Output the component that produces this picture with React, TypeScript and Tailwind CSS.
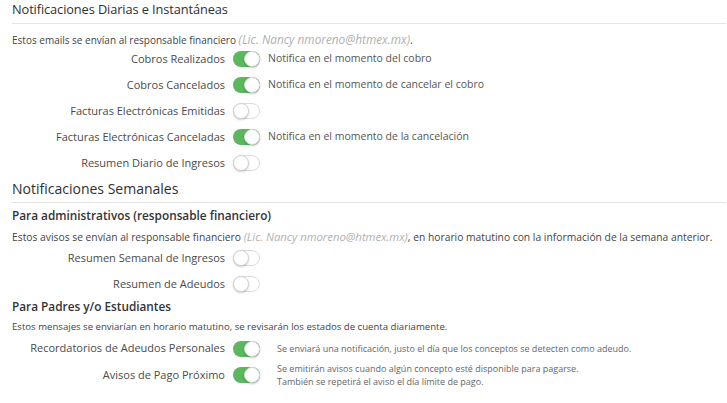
import React from "react";

function Toggle({ on }: { on: boolean }) {
  return on ? (
    <div className="relative w-[27px] h-[16px] rounded-full bg-[#5cb85c] shrink-0">
      <div className="absolute right-0 top-0 w-[16px] h-[16px] rounded-full bg-white border border-[#d9d9d9] shadow-[0_1px_2px_rgba(0,0,0,0.25)]" />
    </div>
  ) : (
    <div className="relative w-[27px] h-[16px] rounded-full bg-white border border-[#dcdcdc] shrink-0">
      <div className="absolute left-[-1px] top-[-1px] w-[16px] h-[16px] rounded-full bg-white border border-[#d4d4d4] shadow-[0_1px_2px_rgba(0,0,0,0.2)]" />
    </div>
  );
}

function Row({
  label,
  on,
  desc,
  small,
  h = "h-[26px]",
}: {
  label: string;
  on: boolean;
  desc?: React.ReactNode;
  small?: boolean;
  h?: string;
}) {
  return (
    <div className={`flex items-center ${h}`}>
      <div className="w-[221px] text-right pr-[8px] text-[11px] text-[#4a4a4a] whitespace-nowrap">{label}</div>
      <Toggle on={on} />
      {desc && (
        <div
          className={
            small
              ? "ml-[17px] text-[9px] leading-[13px] text-[#666]"
              : "ml-[8px] text-[10.5px] text-[#555]"
          }
        >
          {desc}
        </div>
      )}
    </div>
  );
}

export default function App() {
  return (
    <div className="w-[727px] h-[403px] bg-white pl-[12px] pr-[1px] font-['Open_Sans',sans-serif] text-[#444] overflow-hidden">
      <div className="h-[24px] border-b border-[#e5e5e5] flex items-center pb-[3px] text-[12.8px] tracking-[-0.1px] text-[#2f2f2f]">
        Notificaciones Diarias e Instantáneas
      </div>
      <div className="h-[22px] flex items-center pt-[10px] text-[10px] text-[#444]">
        <span>
          Estos emails se envían al responsable financiero{" "}
          <span className="italic text-[11.8px] text-[#b0b0b0]">(Lic. Nancy nmoreno@htmex.mx)</span>.
        </span>
      </div>
      <Row label="Cobros Realizados" on desc="Notifica en el momento del cobro" />
      <Row label="Cobros Cancelados" on desc="Notifica en el momento de cancelar el cobro" />
      <Row label="Facturas Electrónicas Emitidas" on={false} />
      <Row label="Facturas Electrónicas Canceladas" on desc="Notifica en el momento de la cancelación" />
      <Row label="Resumen Diario de Ingresos" on={false} />
      <div className="h-[27px] border-b border-[#e5e5e5] flex items-center pb-[1px] text-[14px] text-[#2f2f2f]">
        Notificaciones Semanales
      </div>
      <div className="h-[22px] flex items-center pt-[3px] text-[11.8px] font-semibold text-[#333]">
        Para administrativos (responsable financiero)
      </div>
      <div className="h-[20px] flex items-center pt-[4px] text-[10.3px] text-[#444]">
        <span>
          Estos avisos se envían al responsable financiero{" "}
          <span className="italic text-[11.3px] text-[#b0b0b0]">(Lic. Nancy nmoreno@htmex.mx)</span>, en horario matutino con la información de la semana anterior.
        </span>
      </div>
      <Row label="Resumen Semanal de Ingresos" on={false} />
      <Row label="Resumen de Adeudos" on={false} />
      <div className="h-[20px] flex items-center text-[11.8px] font-semibold text-[#333]">
        Para Padres y/o Estudiantes
      </div>
      <div className="h-[20px] flex items-center text-[9.6px] text-[#444]">
        Estos mensajes se enviarían en horario matutino, se revisarán los estados de cuenta diariamente.
      </div>
      <Row
        label="Recordatorios de Adeudos Personales"
        on
        small
        h="h-[23px]"
        desc="Se enviará una notificación, justo el día que los conceptos se detecten como adeudo."
      />
      <Row
        label="Avisos de Pago Próximo"
        on
        small
        h="h-[30px]"
        desc={
          <>
            <div>Se emitirán avisos cuando algún concepto esté disponible para pagarse.</div>
            <div>También se repetirá el aviso el día límite de pago.</div>
          </>
        }
      />
    </div>
  );
}
